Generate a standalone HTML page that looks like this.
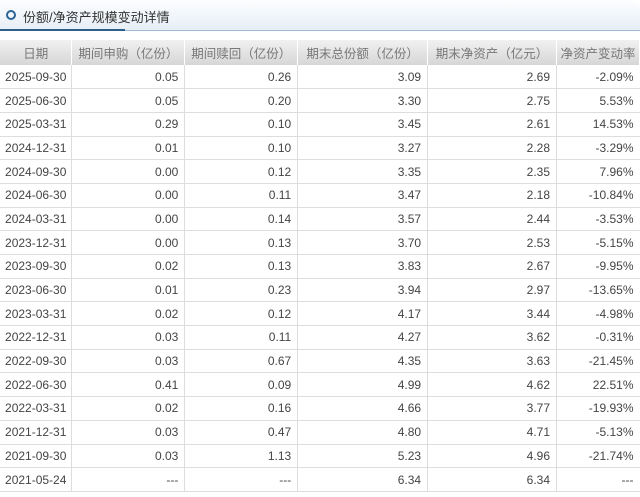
<!DOCTYPE html><html><head><meta charset="utf-8"><style>
body{margin:0;width:640px;height:497px;background:#fff;font-family:"Liberation Sans","Noto Sans CJK SC",sans-serif;overflow:hidden}
.t{position:absolute;left:0;top:0;width:640px;height:30px;background:linear-gradient(#fdfeff,#e6eef6);border-radius:0 8px 0 0}
.t span{position:absolute;left:23px;top:7px;font-size:13px;color:#333}
.t i{position:absolute;left:6px;top:10px;width:6px;height:6px;border:2px solid #2a6496;border-radius:50%}
.l1{position:absolute;left:0;top:30px;width:640px;height:1px;background:#9fbcd6}
.l2{position:absolute;left:0;top:29px;width:125px;height:2px;background:#2c5f8a}
table{position:absolute;left:0;top:40px;border-collapse:collapse;width:640px;font-size:12px;color:#444}
td,th{height:23.7px;padding:0 6px 0 0;border:1px solid #ddd;border-top:none;text-align:right;white-space:nowrap;box-sizing:border-box}
th{height:25px;background:linear-gradient(#f1f1f1,#d6d6d6);color:#777;font-weight:normal;text-align:center;padding:0;border:none;border-right:1px solid #fff;font-size:12.5px}
td:first-child{text-align:center;padding:0}
td:first-child,th:first-child{border-left:none}td:last-child{border-right:none}
</style></head><body>
<div class="t"><i></i><span>份额/净资产规模变动详情</span></div><div class="l1"></div><div class="l2"></div>
<table><colgroup><col style="width:72px"><col style="width:113px"><col style="width:113px"><col style="width:130px"><col style="width:129px"><col style="width:83px"></colgroup>
<tr><th>日期</th><th>期间申购（亿份）</th><th>期间赎回（亿份）</th><th>期末总份额（亿份）</th><th>期末净资产（亿元）</th><th>净资产变动率</th></tr>
<tr><td>2025-09-30</td><td>0.05</td><td>0.26</td><td>3.09</td><td>2.69</td><td>-2.09%</td></tr>
<tr><td>2025-06-30</td><td>0.05</td><td>0.20</td><td>3.30</td><td>2.75</td><td>5.53%</td></tr>
<tr><td>2025-03-31</td><td>0.29</td><td>0.10</td><td>3.45</td><td>2.61</td><td>14.53%</td></tr>
<tr><td>2024-12-31</td><td>0.01</td><td>0.10</td><td>3.27</td><td>2.28</td><td>-3.29%</td></tr>
<tr><td>2024-09-30</td><td>0.00</td><td>0.12</td><td>3.35</td><td>2.35</td><td>7.96%</td></tr>
<tr><td>2024-06-30</td><td>0.00</td><td>0.11</td><td>3.47</td><td>2.18</td><td>-10.84%</td></tr>
<tr><td>2024-03-31</td><td>0.00</td><td>0.14</td><td>3.57</td><td>2.44</td><td>-3.53%</td></tr>
<tr><td>2023-12-31</td><td>0.00</td><td>0.13</td><td>3.70</td><td>2.53</td><td>-5.15%</td></tr>
<tr><td>2023-09-30</td><td>0.02</td><td>0.13</td><td>3.83</td><td>2.67</td><td>-9.95%</td></tr>
<tr><td>2023-06-30</td><td>0.01</td><td>0.23</td><td>3.94</td><td>2.97</td><td>-13.65%</td></tr>
<tr><td>2023-03-31</td><td>0.02</td><td>0.12</td><td>4.17</td><td>3.44</td><td>-4.98%</td></tr>
<tr><td>2022-12-31</td><td>0.03</td><td>0.11</td><td>4.27</td><td>3.62</td><td>-0.31%</td></tr>
<tr><td>2022-09-30</td><td>0.03</td><td>0.67</td><td>4.35</td><td>3.63</td><td>-21.45%</td></tr>
<tr><td>2022-06-30</td><td>0.41</td><td>0.09</td><td>4.99</td><td>4.62</td><td>22.51%</td></tr>
<tr><td>2022-03-31</td><td>0.02</td><td>0.16</td><td>4.66</td><td>3.77</td><td>-19.93%</td></tr>
<tr><td>2021-12-31</td><td>0.03</td><td>0.47</td><td>4.80</td><td>4.71</td><td>-5.13%</td></tr>
<tr><td>2021-09-30</td><td>0.03</td><td>1.13</td><td>5.23</td><td>4.96</td><td>-21.74%</td></tr>
<tr><td>2021-05-24</td><td>---</td><td>---</td><td>6.34</td><td>6.34</td><td>---</td></tr>
</table></body></html>
